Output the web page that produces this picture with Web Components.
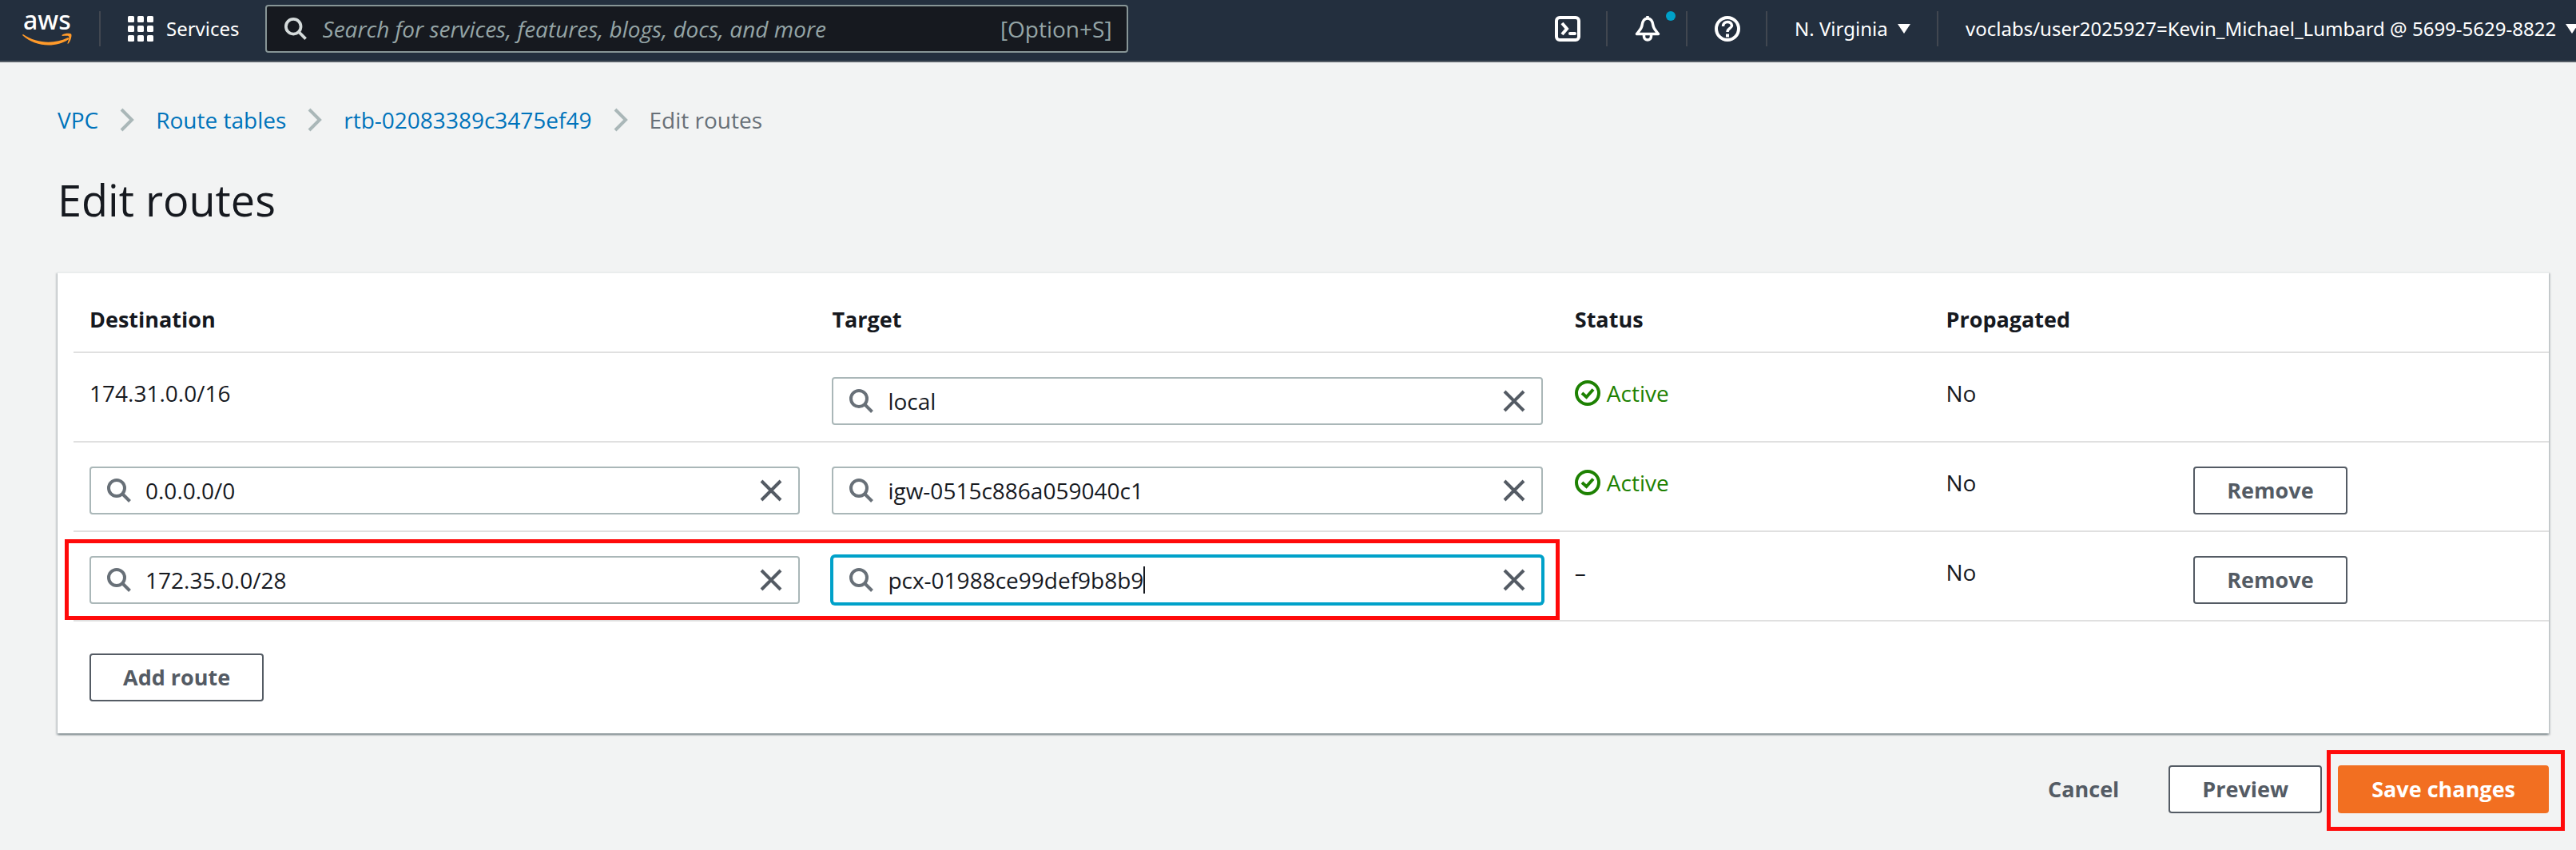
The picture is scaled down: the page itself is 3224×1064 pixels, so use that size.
<!DOCTYPE html>
<html lang="en">
<head>
<meta charset="utf-8">
<title>Edit routes</title>
<style>
  html, body { margin: 0; background: #f2f3f3; }
  body {
    font-family: "Open Sans", "Noto Sans", sans-serif;
    font-size: 28px; line-height: 44px; color: #16191f; overflow-x: hidden;
  }
  main { display: block; padding: 50px 34px 0 72px; }
</style>
</head>
<body>
<console-header></console-header>
<main>
  <bread-crumbs>
    <crumb-item href="#vpc">VPC</crumb-item>
    <crumb-item href="#route-tables">Route tables</crumb-item>
    <crumb-item href="#rtb">rtb-02083389c3475ef49</crumb-item>
    <crumb-item current>Edit routes</crumb-item>
  </bread-crumbs>
  <page-title>Edit routes</page-title>
  <content-card>
    <route-table></route-table>
    <action-button slot="footer">Add route</action-button>
  </content-card>
  <form-actions>
    <action-button variant="link">Cancel</action-button>
    <action-button>Preview</action-button>
    <action-button variant="primary" marked>Save changes</action-button>
  </form-actions>
</main>

<script>
const icons = {
  search: '<svg viewBox="0 0 30 30" fill="none" stroke="currentColor" stroke-width="4"><circle cx="12" cy="12" r="10"/><path d="M19 19 28.500 28.500"/></svg>',
  close: '<svg viewBox="0 0 28 28" fill="none" stroke="currentColor" stroke-width="4"><path d="M2 2 26 26M26 2 2 26"/></svg>',
  check: '<svg viewBox="0 0 32 32" fill="none" stroke="currentColor" stroke-width="4"><circle cx="16" cy="16" r="14"/><path d="M9 16 14.500 21 23 11.500"/></svg>',
  chevron: '<svg viewBox="0 0 18 30" fill="none" stroke="currentColor" stroke-width="4"><path d="M2 2 15 15 2 28"/></svg>',
  grid: '<svg viewBox="0 0 32 32" fill="currentColor">' +
    [0, 12, 24].map(y => [0, 12, 24].map(x => `<rect x="${x}" y="${y}" width="8" height="8" rx="1.500"/>`).join('')).join('') + '</svg>',
  shell: '<svg viewBox="0 0 32 32" fill="none" stroke="currentColor" stroke-width="4"><rect x="2" y="2" width="28" height="28" rx="4"/><path d="M9 9 15 16 9 23"/><path d="M19 22H25" stroke-linecap="round"/></svg>',
  bell: '<svg viewBox="0 0 32 32" fill="none" stroke="currentColor" stroke-width="3.500" stroke-linejoin="round"><path d="M16 3C10.500 3 9.500 8 9 12 8.500 16 5 19 2.500 22.500H29.500C27 19 23.500 16 23 12 22.500 8 21.500 3 16 3Z"/><path d="M11.500 23V25.500A4.500 4.500 0 0 0 20.500 25.500V23"/><path d="M16 0V4"/></svg>',
  help: '<svg viewBox="0 0 32 32" fill="none" stroke="currentColor" stroke-width="4"><circle cx="16" cy="16" r="14"/><path d="M10.500 13C10.500 5.500 21.500 6 21.500 12 21.500 15.500 16 15.500 16 20" stroke-width="3.500"/><path d="M16 22.500V26.500"/></svg>',
  caret: '<svg viewBox="0 0 16 12" fill="currentColor"><path d="M0 0H16L8 12Z"/></svg>',
  aws: '<svg viewBox="0 0 62 42"><text x="1" y="22" font-family="Noto Sans, sans-serif" font-size="32" font-weight="500" fill="#fff">aws</text><path d="M1 28C18 40 41 40 56 32.500 58 31.800 59 33.200 57.500 34.500 42 45 16 44 .5 29.500 0 28.500 .300 27.800 1 28Z" fill="#ff9a2a"/><path d="M50 28.500C53 26.500 60 26.200 61.200 27.800 62.200 29.800 60.500 36.500 57.500 39.500 56.800 40 56.200 39.800 56.500 39 58 35.500 58.800 31.500 58 30.500 57.200 29.500 53 29.800 50.500 30 49.300 30 49 29.200 50 28.500Z" fill="#ff9a2a"/></svg>',
};

class BaseElement extends HTMLElement {
  connectedCallback() {
    if (this.shadowRoot) return;
    this.attachShadow({ mode: 'open' }).innerHTML =
      `<style>*{box-sizing:border-box}svg{display:block;overflow:visible}${this.styles()}</style>${this.markup()}`;
  }
}

customElements.define('console-header', class extends BaseElement {
  styles() {
    return `
      :host { display: block; }
      header { display: flex; align-items: center; height: 78px; padding: 0 0 4px 28px; background: #232f3e;
        border-bottom: 2px solid #545b64; color: #fff; font-size: 24px; line-height: 36px; overflow: hidden; }
      button, a { font: inherit; font-family: "Noto Sans", sans-serif; color: inherit; background: none; border: 0; padding: 0; text-decoration: none; }
      .logo { width: 62px; flex: none; }
      .services { display: flex; align-items: center; gap: 16px; height: 44px; margin-left: 34px; padding: 0 32px 0 34px;
        border-left: 2px solid #414750; flex: none; }
      .grid { width: 32px; }
      .search { display: flex; align-items: center; gap: 20px; width: 1080px; height: 60px; padding: 0 18px 0 22px;
        background: #16191f; border: 2px solid #879596; border-radius: 4px; font-size: 28px; font-weight: 500; color: #95a5a6; }
      .search svg { width: 28px; height: 28px; color: #d5dbdb; }
      input { flex: 1; min-width: 0; font: inherit; color: inherit; background: none; border: 0; padding: 0; outline: 0; }
      input::placeholder { color: #95a5a6; opacity: 1; font-style: italic; }
      nav { display: flex; align-items: center; flex: none; margin-left: auto; margin-right: -44px; }
      nav button { display: flex; align-items: center; gap: 12px; height: 44px; padding: 0 0 0 34px;
        border-left: 2px solid #414750; white-space: nowrap; }
      nav button:first-child { border-color: transparent; }
      nav .icon { width: 100px; position: relative; }
      .icon svg { width: 32px; height: 32px; flex: none; }
      .region { width: 214px; }
      .account { width: 844px; }
      .dot { position: absolute; right: 13px; top: 0; width: 12px; height: 12px; border-radius: 50%; background: #00a1c9; }
      .caret { width: 16px; flex: none; }`;
  }
  markup() {
    return `<header>
      <a class="logo" href="#home" aria-label="AWS home">${icons.aws}</a>
      <button class="services"><span class="grid">${icons.grid}</span>Services</button>
      <label class="search">${icons.search}<input type="text" aria-label="Search" placeholder="Search for services, features, blogs, docs, and more"><span>[Option+S]</span></label>
      <nav>
        <button class="icon" aria-label="CloudShell">${icons.shell}</button>
        <button class="icon" aria-label="Notifications">${icons.bell}<i class="dot"></i></button>
        <button class="icon" aria-label="Help">${icons.help}</button>
        <button class="region">N. Virginia<span class="caret">${icons.caret}</span></button>
        <button class="account">voclabs/user2025927=Kevin_Michael_Lumbard @ 5699-5629-8822<span class="caret">${icons.caret}</span></button>
      </nav></header>`;
  }
});

customElements.define('bread-crumbs', class extends BaseElement {
  styles() { return ':host{display:block} nav{display:flex;gap:27px}'; }
  markup() { return '<nav aria-label="Breadcrumbs"><slot></slot></nav>'; }
});

customElements.define('crumb-item', class extends BaseElement {
  styles() {
    return `:host { display: flex; align-items: center; gap: 27px; color: #687078; }
      a { color: #0073bb; text-decoration: none; font-weight: 500; }
      svg { width: 18px; height: 30px; color: #aab7b8; }`;
  }
  markup() {
    return this.hasAttribute('current')
      ? '<span aria-current="page"><slot></slot></span>'
      : `<a href="${this.getAttribute('href')}"><slot></slot></a>${icons.chevron}`;
  }
});

customElements.define('page-title', class extends BaseElement {
  styles() { return ':host{display:block} h1{margin:40px 0 52px;font-size:54px;line-height:76px;font-weight:400}'; }
  markup() { return '<h1><slot></slot></h1>'; }
});

customElements.define('content-card', class extends BaseElement {
  styles() {
    return `:host { display: block; background: #fff; border-top: 2px solid #eaeded;
        box-shadow: 0 2px 2px rgba(0,28,36,.3), 2px 2px 2px rgba(0,28,36,.15), -2px 2px 2px rgba(0,28,36,.15); }
      .body { padding: 28px 0 0 20px; }
      .footer { display: flex; padding: 40px; }`;
  }
  markup() { return '<div class="body"><slot></slot></div><div class="footer"><slot name="footer"></slot></div>'; }
});

customElements.define('search-field', class extends BaseElement {
  styles() {
    return `:host { display: block; }
      .field { display: flex; align-items: center; height: 60px; padding: 0 20px;
        border: 2px solid #aab7b8; border-radius: 4px; background: #fff; }
      :host([focused]) .field { border-color: #00a1c9; box-shadow: 0 0 0 2px #00a1c9; }
      .search { width: 30px; flex: none; margin-right: 18px; color: #687078; }
      label { display: flex; flex: 1; align-items: center; min-width: 0; }
      input { flex: 1; min-width: 0; font: inherit; line-height: 44px; color: inherit; border: 0; padding: 0; outline: 0; background: none; }
      :host([focused]) input { flex: none; field-sizing: content; }
      .caret { width: 2px; height: 34px; background: #16191f; }
      button { width: 28px; flex: none; padding: 0; border: 0; background: none; color: #545b64; }`;
  }
  markup() {
    const caret = this.hasAttribute('focused') ? '<i class="caret"></i>' : '';
    return `<div class="field"><label><span class="search">${icons.search}</span><input type="text" aria-label="${this.getAttribute('label')}" value="${this.getAttribute('value')}">${caret}</label>
      <button aria-label="Clear">${icons.close}</button></div>`;
  }
});

customElements.define('status-label', class extends BaseElement {
  styles() {
    return ':host{display:flex;align-items:center;gap:8px;color:#1d8102} svg{width:32px;height:32px}';
  }
  markup() { return `${icons.check}<slot></slot>`; }
});

customElements.define('action-button', class extends BaseElement {
  styles() {
    return `:host { display: inline-block; position: relative; }
      button { display: block; height: 60px; padding: 0 40px; border: 2px solid #545b64; border-radius: 4px; background: #fff;
        color: #545b64; font: inherit; font-size: 27px; font-weight: 700; line-height: 44px; white-space: nowrap; }
      :host([variant=link]) button { background: none; border-color: transparent; }
      :host([variant=primary]) button { background: #f26f21; border-color: #f26f21; color: #fff; }
      .mark { position: absolute; inset: -19px -20px -22px -14px; border: 5px solid #ff0a0a; pointer-events: none; }`;
  }
  markup() {
    return `<button type="button"><slot></slot></button>${this.hasAttribute('marked') ? '<i class="mark"></i>' : ''}`;
  }
});

customElements.define('route-table', class extends BaseElement {
  styles() {
    return `:host { display: block; }
      table { width: 100%; table-layout: fixed; border-collapse: separate; border-spacing: 0; }
      th, td { text-align: left; vertical-align: top; border-bottom: 2px solid #e0e0e0; }
      th { padding: 8px 20px 18px; font-size: 27px; font-weight: 700; }
      td { height: 112px; padding: 28px 20px 20px; }
      td.control { padding-top: 30px; }
      .wide { width: 30%; } .mid { width: 15%; } .slim { width: 10%; }
      .first { position: relative; }
      .mark { position: absolute; z-index: 1; left: -11px; top: 9px; bottom: 0; width: calc(200% + 12px); border: 5px solid #ff0a0a; pointer-events: none; }`;
  }
  markup() {
    const remove = '<action-button>Remove</action-button>';
    const field = (label, value, extra = '') => `<search-field label="${label}" value="${value}" ${extra}></search-field>`;
    return `<table>
      <thead><tr><th class="wide">Destination</th><th class="wide">Target</th><th class="mid">Status</th><th class="slim">Propagated</th><th class="mid"></th></tr></thead>
      <tbody>
        <tr><td>174.31.0.0/16</td><td class="control">${field('Target', 'local')}</td><td><status-label>Active</status-label></td><td>No</td><td></td></tr>
        <tr><td class="control">${field('Destination', '0.0.0.0/0')}</td><td class="control">${field('Target', 'igw-0515c886a059040c1')}</td><td><status-label>Active</status-label></td><td>No</td><td class="control">${remove}</td></tr>
        <tr><td class="control first">${field('Destination', '172.35.0.0/28')}<i class="mark"></i></td><td class="control">${field('Target', 'pcx-01988ce99def9b8b9', 'focused')}</td><td>–</td><td>No</td><td class="control">${remove}</td></tr>
      </tbody></table>`;
  }
});

customElements.define('form-actions', class extends BaseElement {
  styles() { return ':host{display:flex;justify-content:flex-end;gap:20px;padding:40px 0 46px}'; }
  markup() { return '<slot></slot>'; }
});
</script>
</body>
</html>
